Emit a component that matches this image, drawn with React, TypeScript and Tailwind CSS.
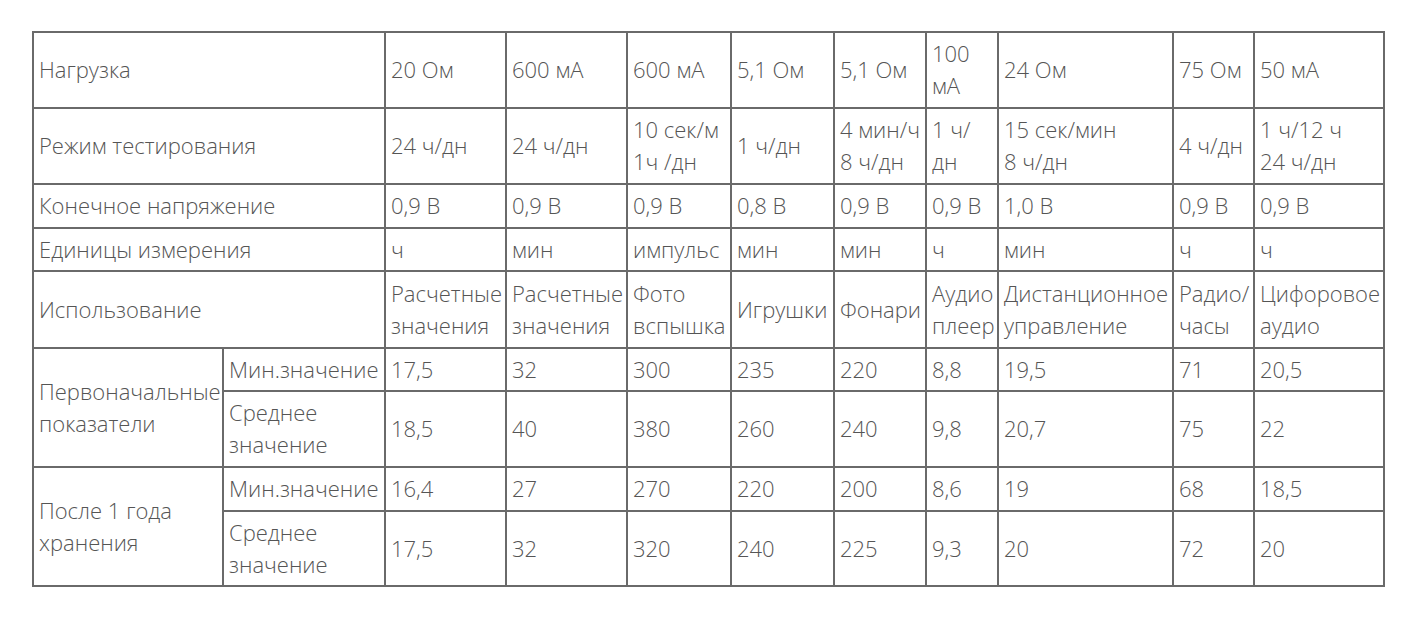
const cols = [190, 162, 121, 121, 104, 103, 92, 72, 175, 81, 130];

type Cell = string[];

const topRows: { label: string; h: string; cells: Cell[] }[] = [
  {
    label: "Нагрузка",
    h: "h-[76px]",
    cells: [["20 Ом"], ["600 мА"], ["600 мА"], ["5,1 Ом"], ["5,1 Ом"], ["100", "мА"], ["24 Ом"], ["75 Ом"], ["50 мА"]],
  },
  {
    label: "Режим тестирования",
    h: "h-[76px]",
    cells: [
      ["24 ч/дн"],
      ["24 ч/дн"],
      ["10 сек/м", "1ч /дн"],
      ["1 ч/дн"],
      ["4 мин/ч", "8 ч/дн"],
      ["1 ч/", "дн"],
      ["15 сек/мин", "8 ч/дн"],
      ["4 ч/дн"],
      ["1 ч/12 ч", "24 ч/дн"],
    ],
  },
  {
    label: "Конечное напряжение",
    h: "h-[44px]",
    cells: [["0,9 В"], ["0,9 В"], ["0,9 В"], ["0,8 В"], ["0,9 В"], ["0,9 В"], ["1,0 В"], ["0,9 В"], ["0,9 В"]],
  },
  {
    label: "Единицы измерения",
    h: "h-[43px]",
    cells: [["ч"], ["мин"], ["импульс"], ["мин"], ["мин"], ["ч"], ["мин"], ["ч"], ["ч"]],
  },
  {
    label: "Использование",
    h: "h-[77px]",
    cells: [
      ["Расчетные", "значения"],
      ["Расчетные", "значения"],
      ["Фото", "вспышка"],
      ["Игрушки"],
      ["Фонари"],
      ["Аудио", "плеер"],
      ["Дистанционное", "управление"],
      ["Радио/", "часы"],
      ["Цифоровое", "аудио"],
    ],
  },
];

const groups = [
  {
    label: ["Первоначальные", "показатели"],
    rows: [
      { sub: ["Мин.значение"], h: "h-[43px]", vals: ["17,5", "32", "300", "235", "220", "8,8", "19,5", "71", "20,5"] },
      { sub: ["Среднее", "значение"], h: "h-[76px]", vals: ["18,5", "40", "380", "260", "240", "9,8", "20,7", "75", "22"] },
    ],
  },
  {
    label: ["После 1 года", "хранения"],
    rows: [
      { sub: ["Мин.значение"], h: "h-[44px]", vals: ["16,4", "27", "270", "220", "200", "8,6", "19", "68", "18,5"] },
      { sub: ["Среднее", "значение"], h: "h-[75px]", vals: ["17,5", "32", "320", "240", "225", "9,3", "20", "72", "20"] },
    ],
  },
];

// every cell shares the same grey border and tight padding
const td = "border-2 border-[#6a6a6a] px-[5px] pt-0 pb-[2px] align-middle whitespace-nowrap overflow-visible";

function Lines({ lines }: { lines: string[] }) {
  return (
    <>
      {lines.map((l, i) => (
        <div key={i}>{l}</div>
      ))}
    </>
  );
}

export default function App() {
  return (
    <div className="min-h-screen bg-white pt-[31px] pl-[32px]" style={{ fontFamily: '"Open Sans", "Noto Sans", sans-serif' }}>
      <table className="table-fixed border-collapse w-[1353px] text-[22px] font-light leading-[32px] text-[#555555]">
        <colgroup>
          {cols.map((w, i) => (
            <col key={i} style={{ width: w }} />
          ))}
        </colgroup>
        <tbody>
          {topRows.map((r) => (
            <tr key={r.label} className={r.h}>
              <td colSpan={2} className={td}>
                {r.label}
              </td>
              {r.cells.map((c, i) => (
                <td key={i} className={td}>
                  <Lines lines={c} />
                </td>
              ))}
            </tr>
          ))}
          {groups.map((g) =>
            g.rows.map((r, ri) => (
              <tr key={g.label[0] + ri} className={r.h}>
                {ri === 0 && (
                  <td rowSpan={2} className={td}>
                    <Lines lines={g.label} />
                  </td>
                )}
                <td className={td}>
                  <Lines lines={r.sub} />
                </td>
                {r.vals.map((v, i) => (
                  <td key={i} className={td}>
                    {v}
                  </td>
                ))}
              </tr>
            ))
          )}
        </tbody>
      </table>
    </div>
  );
}
